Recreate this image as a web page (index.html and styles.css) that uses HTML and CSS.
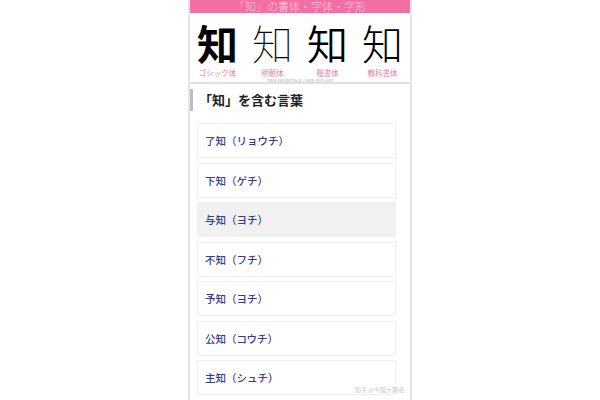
FILE: index.html
```html
<!DOCTYPE html>
<html lang="ja">
<head>
<meta charset="utf-8">
<link rel="stylesheet" href="styles.css">
</head>
<body>
<div class="page">
  <div class="banner">「知」の書体・字体・字形</div>
  <div class="glyphs">
    <div class="gcol"><span class="big gothic">知</span><span class="lbl">ゴシック体</span></div>
    <div class="gcol"><span class="big mincho">知</span><span class="lbl">明朝体</span></div>
    <div class="gcol"><span class="big kaisho">知</span><span class="lbl">楷書体</span></div>
    <div class="gcol"><span class="big kyoka">知</span><span class="lbl">教科書体</span></div>
  </div>
  <div class="credit">www.kanjipedia.jp / kanji-jiten.com</div>
  <div class="sep"></div>
  <h2 class="heading">「知」を含む言葉</h2>
  <ul class="words">
    <li class="word">了知（リョウチ）</li>
    <li class="word">下知（ゲチ）</li>
    <li class="word active">与知（ヨチ）</li>
    <li class="word">不知（フチ）</li>
    <li class="word">予知（ヨチ）</li>
    <li class="word">公知（コウチ）</li>
    <li class="word">主知（シュチ）</li>
  </ul>
  <div class="watermark">知乎 @今强大聊话</div>
</div>
</body>
</html>
```
FILE: styles.css
```css
html, body {
  margin: 0;
  padding: 0;
  background: #ffffff;
  height: 400px;
  overflow: hidden;
}
body {
  font-family: "Noto Sans CJK JP", "Noto Sans", sans-serif;
}
.page {
  position: relative;
  width: 220px;
  height: 400px;
  margin: 0 auto;
  border-left: 2px solid #e6e6e6;
  border-right: 2px solid #e6e6e6;
  background: #fff;
}
.banner {
  height: 13px;
  background: #f26ea4;
  color: rgba(255, 225, 236, 0.8);
  font-size: 11px;
  font-weight: 300;
  line-height: 12px;
  text-align: center;
  overflow: hidden;
}
.glyphs {
  display: grid;
  grid-template-columns: repeat(4, 1fr);
  height: 66px;
}
.gcol {
  display: flex;
  flex-direction: column;
  align-items: center;
}
.big {
  font-size: 41px;
  line-height: 41px;
  margin-top: 9px;
  color: #000;
}
.gothic { font-weight: 700; }
.mincho { font-weight: 100; }
.kaisho { font-weight: 350; }
.kyoka { font-weight: 250; }
.lbl {
  font-size: 7.5px;
  line-height: 9px;
  margin-top: 5px;
  color: #e57ca5;
}
.credit {
  font-size: 4px;
  line-height: 3px;
  color: #b5b5b5;
  text-align: center;
}
.sep {
  height: 2px;
  background: #e2e2e2;
}
.heading {
  margin: 5px 0 0 0;
  height: 22px;
  border-left: 3px solid #bdbdbd;
  padding-left: 6px;
  font-size: 13px;
  line-height: 22px;
  font-weight: 700;
  color: #222;
}
.words {
  list-style: none;
  margin: 12px 14px 0 7px;
  padding: 0;
  display: flex;
  flex-direction: column;
  gap: 4.5px;
}
.word {
  height: 33px;
  border: 1px solid #efefef;
  padding-left: 7px;
  display: flex;
  align-items: center;
  font-size: 10.5px;
  font-weight: 500;
  color: #3a3a8c;
  background: #fff;
}
.word.active {
  background: #f1f1f1;
  border-color: #f1f1f1;
}
.watermark {
  position: absolute;
  right: 6px;
  bottom: 6px;
  font-size: 6px;
  color: #c8c8c8;
}
```
